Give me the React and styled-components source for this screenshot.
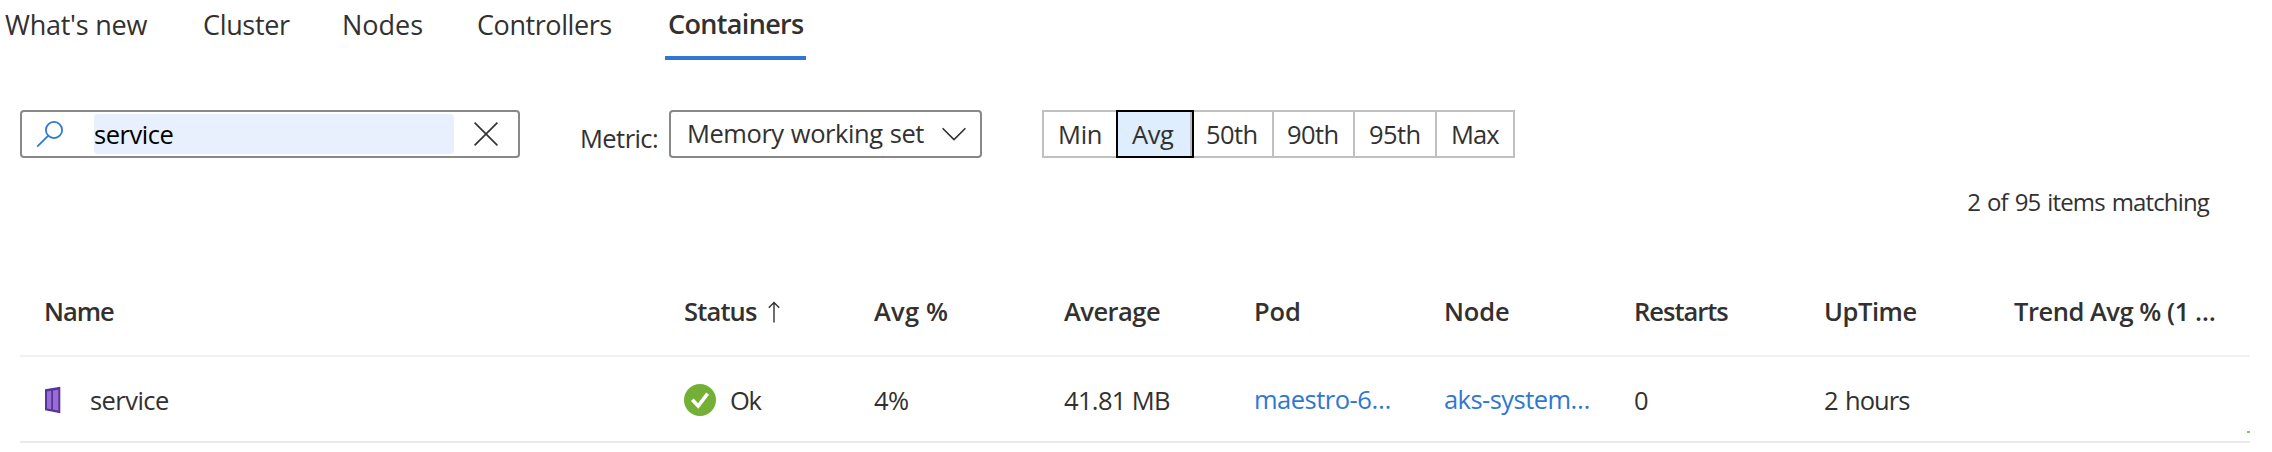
import React from 'react';
import styled, { createGlobalStyle } from 'styled-components';

const GlobalStyle = createGlobalStyle`
  * { box-sizing: border-box; }
  body { margin: 0; background: #fff; }
`;

const Page = styled.main`
  width: 2272px;
  height: 452px;
  overflow: hidden;
  display: flex;
  flex-direction: column;
  background: #fff;
  color: #323130;
  font-family: 'Segoe UI', 'Open Sans', 'Noto Sans', sans-serif;
  font-size: 25.5px;
  white-space: nowrap;
`;

const Label = styled.span`
  letter-spacing: ${(p) => p.$track || 0}px;
  word-spacing: ${(p) => p.$words || 0}px;
`;

const TabBar = styled.nav`
  display: flex;
  height: 60px;
  padding-left: 5px;
`;

const Tab = styled.a`
  width: ${(p) => p.$width}px;
  height: 60px;
  padding-left: ${(p) => (p.$active ? 3 : 0)}px;
  border-bottom: 4px solid ${(p) => (p.$active ? '#2f78d2' : 'transparent')};
  font-size: 27px;
  line-height: ${(p) => (p.$active ? 47 : 49)}px;
  font-weight: ${(p) => (p.$active ? 600 : 400)};
`;

const Toolbar = styled.div`
  display: flex;
  height: 48px;
  margin: 50px 0 0 20px;
`;

const SearchBox = styled.div`
  display: flex;
  align-items: center;
  width: 500px;
  height: 48px;
  padding-left: 14px;
  border: 2px solid #8a8886;
  border-radius: 4px;
`;

const SearchValue = styled.div`
  width: 360px;
  height: 40px;
  margin: 0 20px 0 30px;
  border-radius: 4px;
  background: #e8effd;
  color: #000;
  line-height: 40px;
`;

const MetricLabel = styled.label`
  width: 89px;
  margin-left: 60px;
  line-height: 56px;
`;

const Dropdown = styled.div`
  display: flex;
  align-items: center;
  justify-content: space-between;
  width: 313px;
  height: 48px;
  padding: 0 14px 0 16px;
  border: 2px solid #8a8886;
  border-radius: 4px;
  line-height: 42px;

  span { margin-top: -2px; }
`;

const Segments = styled.div`
  display: flex;
  margin-left: 60px;
`;

const Segment = styled.button`
  width: ${(p) => p.$width}px;
  height: 48px;
  margin: 0 0 0 ${(p) => (p.$first ? 0 : -2)}px;
  padding: 0 0 0 ${(p) => p.$inset}px;
  border: 2px solid ${(p) => (p.$active ? '#000' : '#c0c0c0')};
  background: ${(p) => (p.$active ? '#dfeeff' : '#fff')};
  box-shadow: ${(p) => (p.$active ? 'inset -2px 0 #b8bcc2' : 'none')};
  z-index: ${(p) => (p.$active ? 1 : 0)};
  position: relative;
  color: inherit;
  font: inherit;
  line-height: 44px;
  text-align: left;
`;

const MatchCount = styled.div`
  height: 109px;
  padding: 26px 63px 0 0;
  font-size: 24px;
  line-height: 36px;
  text-align: right;
`;

const Table = styled.section`
  width: 2230px;
  margin-left: 20px;
`;

const Row = styled.div`
  display: grid;
  grid-template-columns: 640px repeat(7, 190px) 1fr;
  align-items: center;
  padding-left: 24px;
`;

const HeaderRow = styled(Row)`
  height: 90px;
  border-bottom: 2px solid #f1f1f1;
  font-weight: 600;
`;

const DataRow = styled(Row)`
  height: 86px;
  padding-top: 2px;
  border-bottom: 2px solid #eaeaea;
`;

const Cell = styled.div`
  display: flex;
  align-items: center;
  line-height: 36px;
`;

const LinkCell = styled(Cell)`
  color: #2f78d2;
  padding-bottom: 2px;
`;

const TrendCell = styled(Cell)`
  align-self: end;
  align-items: flex-start;
  justify-content: flex-end;
  height: 10px;
`;

const TrendBar = styled.i`
  width: 3px;
  height: 2px;
  background: #7cc67c;
`;

const Glyph = styled.svg`
  display: block;
  flex: none;
  fill: none;
  margin: ${(p) => p.$margin || 0};
`;

const tabs = [
  ['What\'s new', 198, -0.25],
  ['Cluster', 139, -0.34],
  ['Nodes', 135, 0],
  ['Controllers', 188, -0.42],
  ['Containers', 141, -0.66],
];

const segments = [
  ['Min', 76, 14, -0.3],
  ['Avg', 78, 14, -0.4],
  ['50th', 82, 12, -0.6],
  ['90th', 83, 13, -0.6],
  ['95th', 84, 14, -0.6],
  ['Max', 80, 14, -0.9],
];

const headers = [
  ['Name', -1],
  ['Status', -0.84],
  ['Avg %', 0.2],
  ['Average', -0.52],
  ['Pod', -0.12],
  ['Node', -0.14],
  ['Restarts', -1],
  ['UpTime', -0.43],
  ['Trend Avg % (1 …', -0.47],
];

export default function App() {
  return (
    <Page>
      <GlobalStyle />
      <TabBar>
        {tabs.map(([text, width, track]) => (
          <Tab key={text} $width={width} $active={text === 'Containers'}>
            <Label $track={track}>{text}</Label>
          </Tab>
        ))}
      </TabBar>
      <Toolbar>
        <SearchBox>
          <Glyph width="28" height="28" viewBox="0 0 28 28" stroke="#2f78d2" strokeWidth="1.8">
            <circle cx="18" cy="10" r="8.1" />
            <path d="M12.1 15.9 1.2 26.7" />
          </Glyph>
          <SearchValue><Label $track={-0.45}>service</Label></SearchValue>
          <Glyph width="24" height="24" viewBox="0 0 24 24" stroke="#323130" strokeWidth="1.6">
            <path d="M.6.6l22.8 22.8M23.4.6.6 23.4" />
          </Glyph>
        </SearchBox>
        <MetricLabel><Label $track={-0.57}>Metric:</Label></MetricLabel>
        <Dropdown>
          <Label $track={-0.45} $words={1}>Memory working set</Label>
          <Glyph width="24" height="14" viewBox="0 0 24 14" stroke="#323130" strokeWidth="1.6">
            <path d="M.6 1.2 12 12.5 23.4 1.2" />
          </Glyph>
        </Dropdown>
        <Segments>
          {segments.map(([text, width, inset, track], i) => (
            <Segment key={text} $width={width} $inset={inset} $first={i === 0} $active={text === 'Avg'}>
              <Label $track={track}>{text}</Label>
            </Segment>
          ))}
        </Segments>
      </Toolbar>
      <MatchCount><Label $track={-0.85} $words={1.5}>2 of 95 items matching</Label></MatchCount>
      <Table>
        <HeaderRow>
          {headers.map(([text, track]) => (
            <Cell key={text}>
              <Label $track={track}>{text}</Label>
              {text === 'Status' && (
                <Glyph width="12" height="22" viewBox="0 0 12 22" stroke="#323130" strokeWidth="1.4" $margin="2px 0 0 11px">
                  <path d="M6 1.5V21.5M.8 6.7 6 1.5l5.2 5.2" />
                </Glyph>
              )}
            </Cell>
          ))}
        </HeaderRow>
        <DataRow>
          <Cell>
            <Glyph width="18" height="28" viewBox="0 0 18 28" $margin="0 28px 0 0">
              <path d="M1 3.2 16.3.8v26.4L1 24.2z" fill="#55359a" />
              <path d="M3 5.4 7.2 4.8v18.5L3 22.6zM9 4.6l5.3-.8v20.6L9 23.6z" fill="#9a6cd6" />
            </Glyph>
            <Label $track={-0.55}>service</Label>
          </Cell>
          <Cell>
            <Glyph width="32" height="32" viewBox="0 0 32 32" $margin="0 14px 0 0">
              <circle cx="16" cy="16" r="16" fill="#73b035" />
              <path d="M8.3 15.7 14.2 22 23.6 9.6" stroke="#fff" strokeWidth="3.6" />
            </Glyph>
            <Label $track={-1.4}>Ok</Label>
          </Cell>
          <Cell><Label $track={-0.58}>4%</Label></Cell>
          <Cell><Label $track={-0.65}>41.81 MB</Label></Cell>
          <LinkCell as="a"><Label $track={-0.5}>maestro-6…</Label></LinkCell>
          <LinkCell as="a"><Label $track={-0.55}>aks-system…</Label></LinkCell>
          <Cell><Label>0</Label></Cell>
          <Cell><Label $track={-0.9} $words={1.5}>2 hours</Label></Cell>
          <TrendCell><TrendBar /></TrendCell>
        </DataRow>
      </Table>
    </Page>
  );
}
